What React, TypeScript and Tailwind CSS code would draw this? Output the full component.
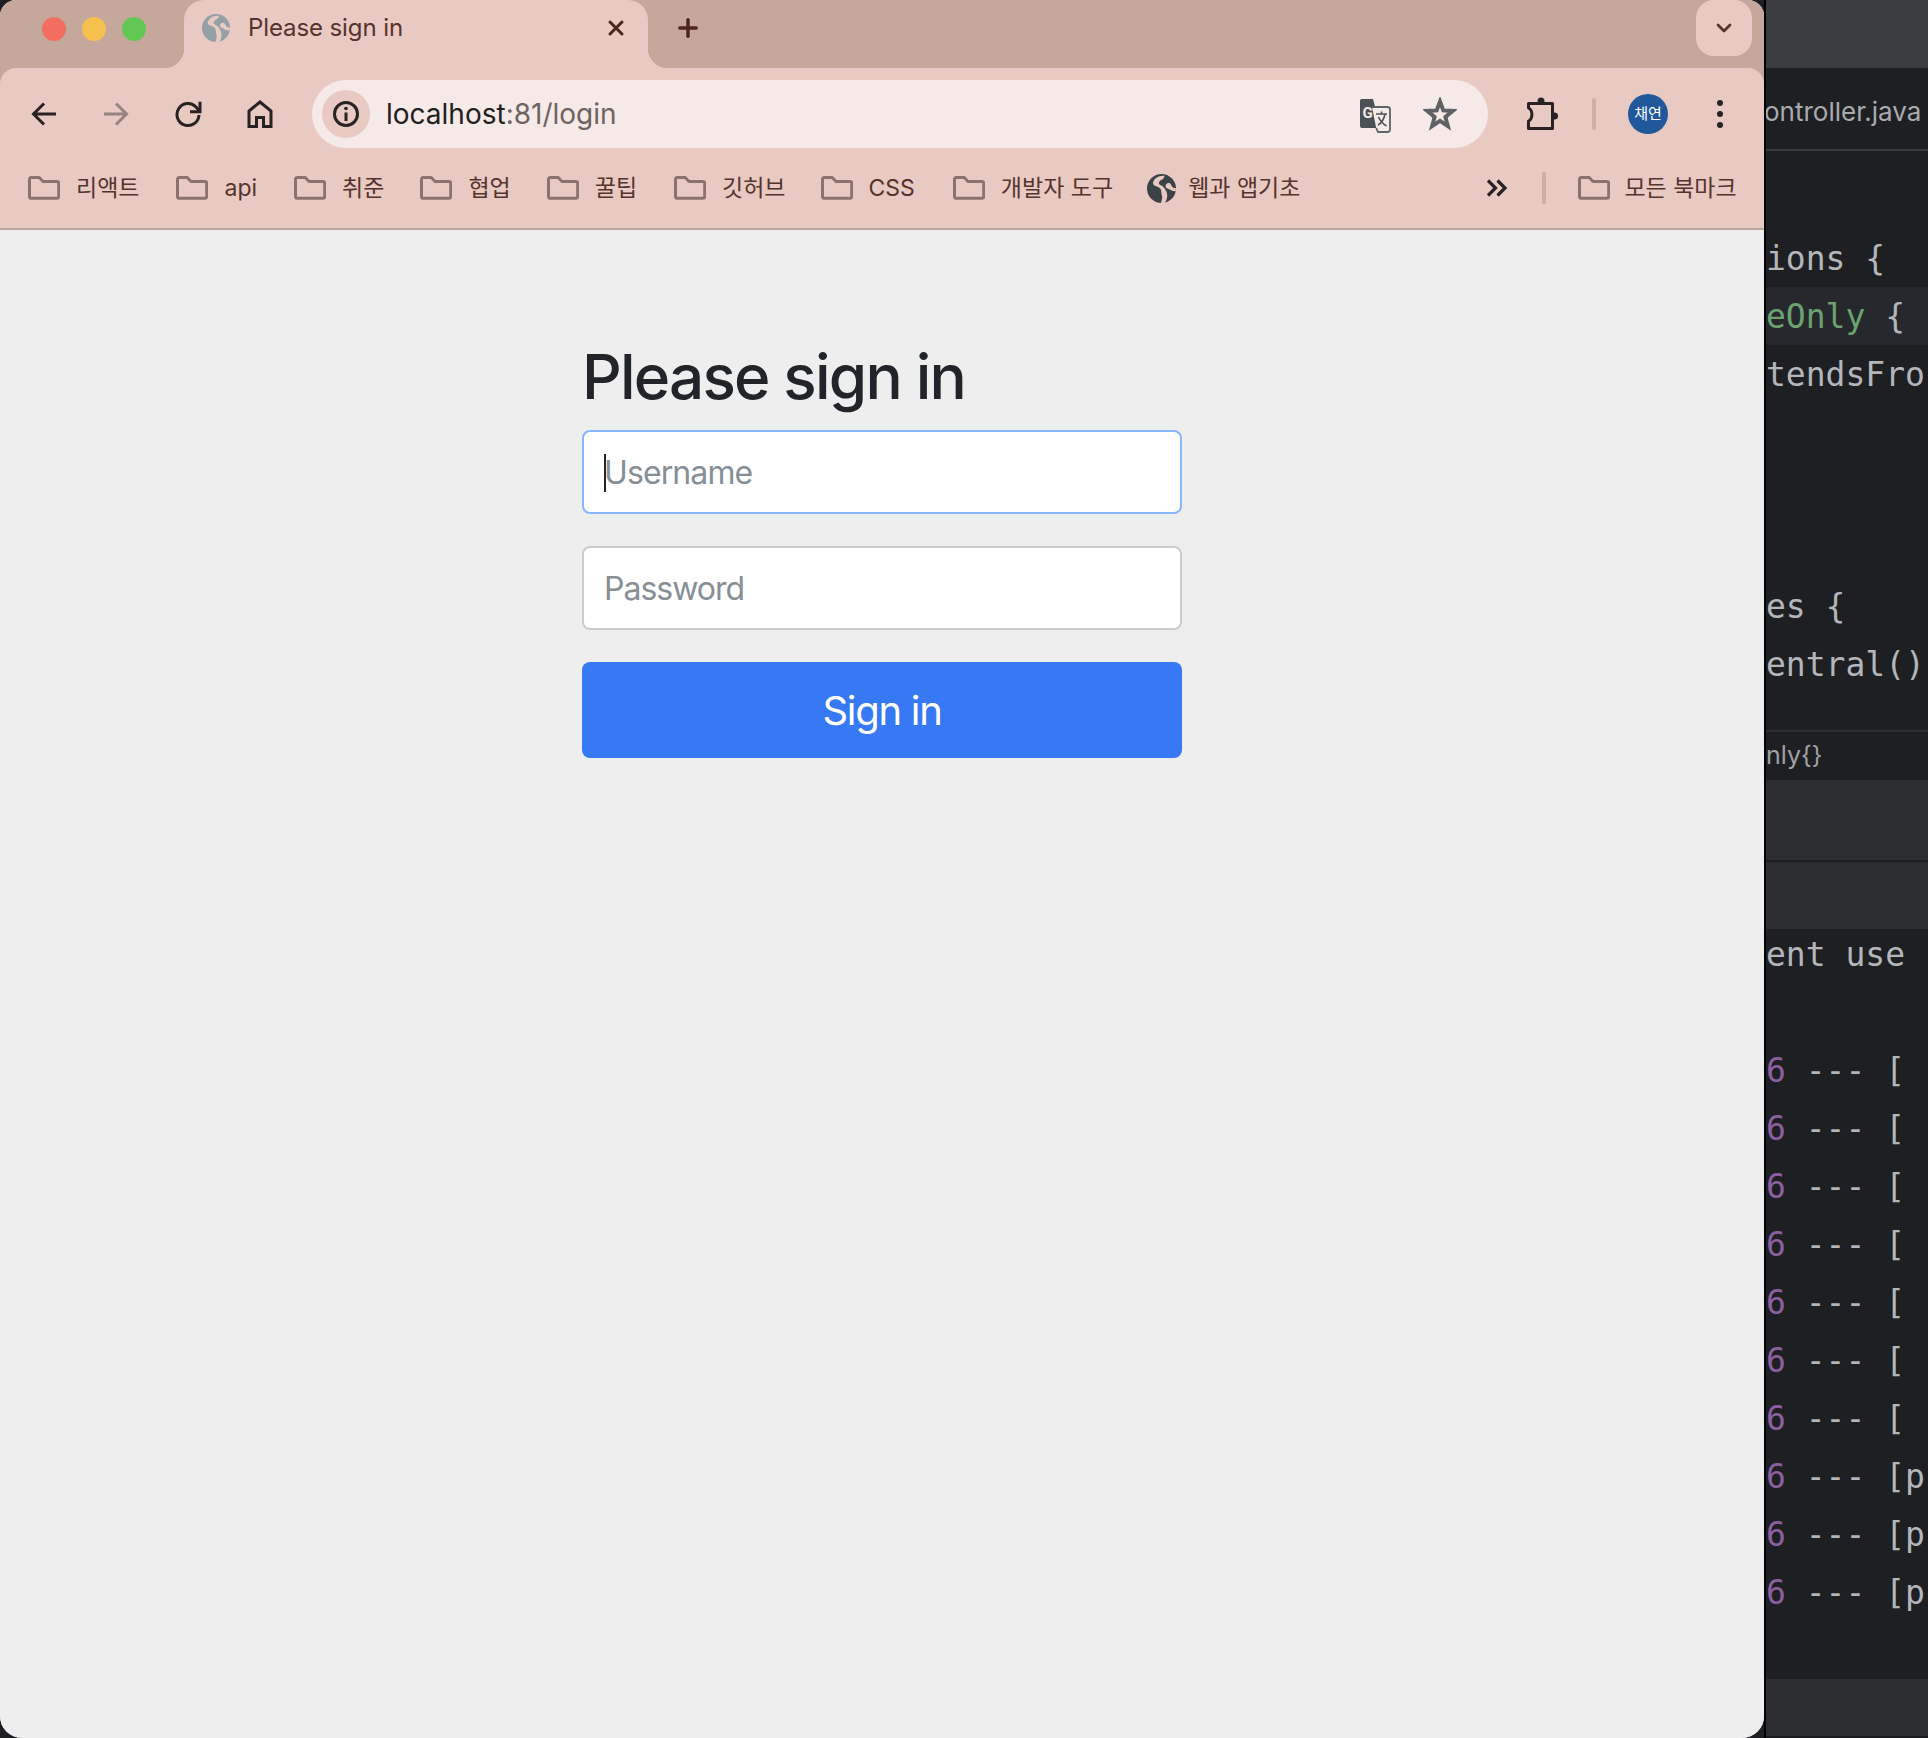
import { ChevronDown, Plus, X } from "lucide-react"

const uiFont = "font-['Inter','Noto_Sans_CJK_KR',sans-serif]"
const monoFont = "font-['DejaVu_Sans_Mono',monospace]"

const Globe = ({ className, land }: { className: string; land: string }) => (
  <svg viewBox="0 0 24 24" className={className}>
    <circle cx="12" cy="12" r="12" fill="currentColor" />
    <path d="M14.500 1.500C10 1 5.500 3.500 5 7.500c-.2 2.500 3.500 2.500 5.500 4 2 1.500 1 4.500 2 6.500.5 2-.5 4-1 6h3.500c1.500-3 2.500-6 1-9.500-1-2.500-2.500-4.500-5-5.500-1.500-.5-1.500-2-.5-3 1.500-1.500 3.500-1.500 4-4.500z" fill={land} />
    <path d="M15.500 9c1.500-2 3.500-2 4.500 0 1 2 2 3 3.800 2.500l.1 2.500c-2.900 1-4.900-1.500-6.900-2-1-.2-2-1.500-1.500-3z" fill={land} />
  </svg>
)

const Folder = () => (
  <svg viewBox="0 0 32 24" className="h-6 w-8 shrink-0 text-[#8a736b]" fill="none" stroke="currentColor" strokeWidth="3" strokeLinejoin="round">
    <path d="M1.500 3.200c0-1 .7-1.700 1.700-1.700h8l3.800 4h14c1 0 1.700.7 1.700 1.700v13.400c0 1-.7 1.700-1.700 1.700H3.200c-1 0-1.700-.7-1.700-1.700z" />
  </svg>
)

const bookmarks = [
  { label: "리액트", ml: "ml-[28px]" },
  { label: "api", ml: "ml-[37px]" },
  { label: "취준", ml: "ml-[37px]" },
  { label: "협업", ml: "ml-[36px]" },
  { label: "꿀팁", ml: "ml-[36px]" },
  { label: "깃허브", ml: "ml-[37px]" },
  { label: "CSS", ml: "ml-[35px]" },
  { label: "개발자 도구", ml: "ml-[38px]" },
]

const TabStrip = () => (
  <div className="flex h-[68px] items-start">
    <div className="ml-[42px] flex gap-4 pt-[17px]">
      <span className="size-6 rounded-full bg-[#f26e60]" />
      <span className="size-6 rounded-full bg-[#f6c04f]" />
      <span className="size-6 rounded-full bg-[#62c853]" />
    </div>
    <div className="relative ml-[38px] flex h-[68px] w-[464px] items-start rounded-t-[20px] bg-[#e9cac3] pt-[13px]">
      <span className="absolute bottom-0 -left-5 size-5 bg-[radial-gradient(circle_at_0_0,transparent_20px,#e9cac3_20.5px)]" />
      <span className="absolute -right-5 bottom-0 size-5 bg-[radial-gradient(circle_at_100%_0,transparent_20px,#e9cac3_20.5px)]" />
      <Globe className="mt-px ml-[18px] size-[28px] text-[#94a0a6]" land="#e9cac3" />
      <span className={`ml-[18px] text-[24px] leading-[30px] tracking-[-0.1px] text-[#56332d] ${uiFont}`}>Please sign in</span>
      <X className="absolute top-[16px] left-[420px] size-6 text-[#4b2620]" strokeWidth={3} />
    </div>
    <Plus className="mt-[14px] ml-[26px] size-7 text-[#4b2620]" strokeWidth={3} />
    <div className="mt-0 mr-3 ml-auto flex h-14 w-14 items-center justify-center rounded-[18px] bg-[#e9cac3]">
      <ChevronDown className="size-6 text-[#56332d]" strokeWidth={2.8} />
    </div>
  </div>
)

const Toolbar = () => (
  <div className="flex h-[92px] items-center rounded-t-[16px] bg-[#e9cac3]">
    {/* back */}
    <svg viewBox="0 0 28 28" className="ml-[30px] size-7 text-[#272322]" fill="none" stroke="currentColor" strokeWidth="3">
      <path d="M26 14H4M14 3.500 3.500 14 14 24.500" />
    </svg>
    <svg viewBox="0 0 28 28" className="ml-[44px] size-7 text-[#968480]" fill="none" stroke="currentColor" strokeWidth="3">
      <path d="M2 14h22M14 3.500 24.500 14 14 24.500" />
    </svg>
    {/* reload */}
    <svg viewBox="0 0 28 28" className="ml-[44px] size-7 text-[#272322]" fill="none" stroke="currentColor" strokeWidth="3">
      <path d="M25 15a11 11 0 1 1-3-8l3.500 4" />
      <path d="M26 1.700v10H16" />
    </svg>
    {/* home */}
    <svg viewBox="0 0 28 28" className="ml-[44px] size-7 text-[#272322]" fill="none" stroke="currentColor" strokeWidth="3" strokeLinejoin="miter">
      <path d="M14 2 3 11v15.500h7.500v-9h7v9H25V11z" />
    </svg>
    <div className="ml-[38px] flex h-[68px] w-[1176px] items-center rounded-full bg-[#f6eae8]">
      <div className="ml-[10px] flex h-12 w-12 items-center justify-center rounded-full bg-[#e9cac3]">
        <svg viewBox="0 0 28 28" className="size-7 text-[#272322]" fill="none" stroke="currentColor" strokeWidth="3">
          <circle cx="14" cy="14" r="11.500" />
          <path d="M14 12.500V21" />
          <circle cx="14" cy="8.500" r="1.800" fill="currentColor" stroke="none" />
        </svg>
      </div>
      <span className={`ml-[16px] text-[28px] text-[#6d6361] ${uiFont}`}>
        <span className="text-[#232020]">localhost</span>:81/login
      </span>
      {/* translate */}
      <svg viewBox="0 0 34 34" className="mt-[3px] ml-auto size-[34px]">
        <path d="M2 2.500A2 2 0 0 1 4 0h11l8 29H4a2 2 0 0 1-2-2z" fill="#4b5154" />
        <path d="M14 8h15.500A2.500 2.500 0 0 1 32 10.500v20a2.500 2.500 0 0 1-2.500 2.500H20l-1.800-4" fill="#f6eae8" stroke="#5d6366" strokeWidth="1.800" />
        <text x="4.500" y="19" fontSize="15" fontWeight="700" fill="#f6eae8" fontFamily="Roboto, sans-serif">G</text>
        <path d="M18 15h11M23.500 12.500V15M20 26c4-2 6-6 7-11M20.500 18c1.500 3.500 4 6.500 8 9" fill="none" stroke="#4b5154" strokeWidth="1.600" />
      </svg>
      {/* star */}
      <svg viewBox="0 0 34 34" className="mr-[31px] ml-[31px] size-[34px] text-[#5f6265]" fill="none" stroke="currentColor" strokeWidth="4" strokeLinejoin="miter">
        <path d="M17 4.500 20.300 13.400 29.800 13.900 22.400 19.900 24.900 29.100 17 23.900 9.100 29.100 11.600 19.900 4.200 13.900 13.700 13.400z" />
      </svg>
    </div>
    {/* extensions */}
    <svg viewBox="0 0 34 34" className="ml-[37px] size-[34px] text-[#272322]" fill="none" stroke="currentColor" strokeWidth="3" strokeLinejoin="round">
      <path d="M3.500 6.500h24v25h-24V24c4.500-2 4.500-11 0-13z" />
      <circle cx="16" cy="4" r="3.500" fill="currentColor" stroke="none" />
      <circle cx="29.500" cy="19" r="3.500" fill="currentColor" stroke="none" />
    </svg>
    <span className="ml-[33px] h-8 w-1 rounded-sm bg-[#cfaea5]" />
    <div className={`ml-[32px] flex size-10 items-center justify-center rounded-full bg-[#20589b] text-[15px] text-white ${uiFont}`}>채연</div>
    <div className="ml-[49px] flex flex-col gap-[5px]">
      <span className="size-[6px] rounded-full bg-[#272322]" />
      <span className="size-[6px] rounded-full bg-[#272322]" />
      <span className="size-[6px] rounded-full bg-[#272322]" />
    </div>
  </div>
)

const BookmarksBar = () => (
  <div className={`flex h-[70px] items-center border-b-2 border-[#bfa59d] bg-[#e9cac3] pb-[12px] text-[23px] text-[#56332d] ${uiFont}`}>
    {bookmarks.map((b) => (
      <div key={b.label} className={`flex shrink-0 items-center gap-[16px] ${b.ml}`}>
        <Folder />
        <span className="leading-none whitespace-nowrap">{b.label}</span>
      </div>
    ))}
    <div className="ml-[34px] flex shrink-0 items-center gap-3">
      <Globe className="size-[29px] text-[#3c4347]" land="#e9cac3" />
      <span className="whitespace-nowrap">웹과 앱기초</span>
    </div>
    <svg viewBox="0 0 24 20" className="ml-[185px] h-5 w-6 shrink-0 text-[#272322]" fill="none" stroke="currentColor" strokeWidth="3.200">
      <path d="M3 2.500 10.500 10 3 17.500M12.500 2.500 20 10l-7.500 7.500" />
    </svg>
    <span className="ml-[33px] h-8 w-1 shrink-0 rounded-sm bg-[#cfaea5]" />
    <div className="ml-[32px] flex shrink-0 items-center gap-[14px]">
      <Folder />
      <span className="whitespace-nowrap">모든 북마크</span>
    </div>
  </div>
)

const LoginForm = () => (
  <div className={`flex flex-1 flex-col items-center bg-[#eeeeee] pt-[109px] ${uiFont}`}>
    <div className="flex w-[600px] flex-col">
      <h2 className="text-[62px] leading-[76px] font-medium tracking-[-1.800px] text-[#212529]">Please sign in</h2>
      <div className="relative mt-[15px] flex h-[84px] items-center rounded-lg border-2 border-[#86b7fe] bg-white pt-[2px] pl-[20px] text-[32px] tracking-[-0.900px] text-[#868e96]">
        <span className="absolute top-[22px] left-[20px] h-[38px] w-[2px] bg-[#212529]" />
        Username
      </div>
      <div className="mt-[32px] flex h-[84px] items-center rounded-lg border-2 border-[#cccccc] bg-white pt-[2px] pl-[20px] text-[32px] tracking-[-1px] text-[#868e96]">
        Password
      </div>
      <button className="mt-[32px] h-[96px] rounded-lg bg-[#3779f5] pt-px text-[40px] tracking-[-1.300px] text-white">Sign in</button>
    </div>
  </div>
)

const CodeLine = ({ children }: { children?: React.ReactNode }) => (
  <div className={`flex h-[58px] shrink-0 items-center pt-[2px] text-[33px] text-[#b4b6bb] ${monoFont}`}>
    <span className="whitespace-pre">{children}</span>
  </div>
)

const logRows = ["[", "[", "[", "[", "[", "[", "[", "[p", "[p", "[p"]

const IdePane = () => (
  <div className="flex h-[1738px] min-w-0 flex-1 flex-col overflow-hidden border-l-2 border-black bg-[#1e1f22]">
    <div className="h-[68px] shrink-0 bg-[#3c3d3f]" />
    <div className={`flex h-[83px] shrink-0 items-center border-b-2 border-[#393b40] pt-[6px] text-[26px] whitespace-nowrap text-[#a9abb0] ${uiFont}`}>
      <span className="-ml-[2px]">ontroller.java</span>
    </div>
    <div className="h-[78px] shrink-0" />
    <CodeLine>ions {"{"}</CodeLine>
    <div className="shrink-0 bg-[#26282e]">
      <CodeLine>
        <span className="text-[#6aa36f]">eOnly</span> {"{"}
      </CodeLine>
    </div>
    <CodeLine>tendsFro</CodeLine>
    <div className="h-[174px] shrink-0" />
    <CodeLine>es {"{"}</CodeLine>
    <CodeLine>entral()</CodeLine>
    <div className="h-[37px] shrink-0" />
    <div className={`flex h-[50px] shrink-0 items-center border-t-2 border-[#2b2d30] text-[25px] text-[#a0a2a6] ${uiFont}`}>nly{"{}"}</div>
    <div className="h-[82px] shrink-0 border-b-2 border-[#1e1f22] bg-[#2b2d30]" />
    <div className="h-[67px] shrink-0 bg-[#2b2d30]" />
    <div className={`flex h-[50px] shrink-0 items-center pt-[2px] text-[33px] text-[#b4b6bb] ${monoFont}`}>
      <span className="whitespace-pre">ent use</span>
    </div>
    <div className="h-[62px] shrink-0" />
    {logRows.map((row, i) => (
      <CodeLine key={i}>
        <span className="text-[#8c5fa0]">6</span> --- {row}
      </CodeLine>
    ))}
    <div className="mt-auto h-[59px] shrink-0 border-b-2 border-[#1a1b1d] bg-[#2b2d30]" />
  </div>
)

export default function App() {
  return (
    <div className="flex h-[1738px] w-[1928px] overflow-hidden bg-[#1e1f22]">
      <div className="flex h-[1738px] w-[1764px] shrink-0 flex-col overflow-hidden rounded-t-[16px] rounded-b-[22px] bg-[#eeeeee]">
        <div className="bg-[#c5a79b]">
          <TabStrip />
          <Toolbar />
        </div>
        <BookmarksBar />
        <LoginForm />
      </div>
      <IdePane />
    </div>
  )
}
